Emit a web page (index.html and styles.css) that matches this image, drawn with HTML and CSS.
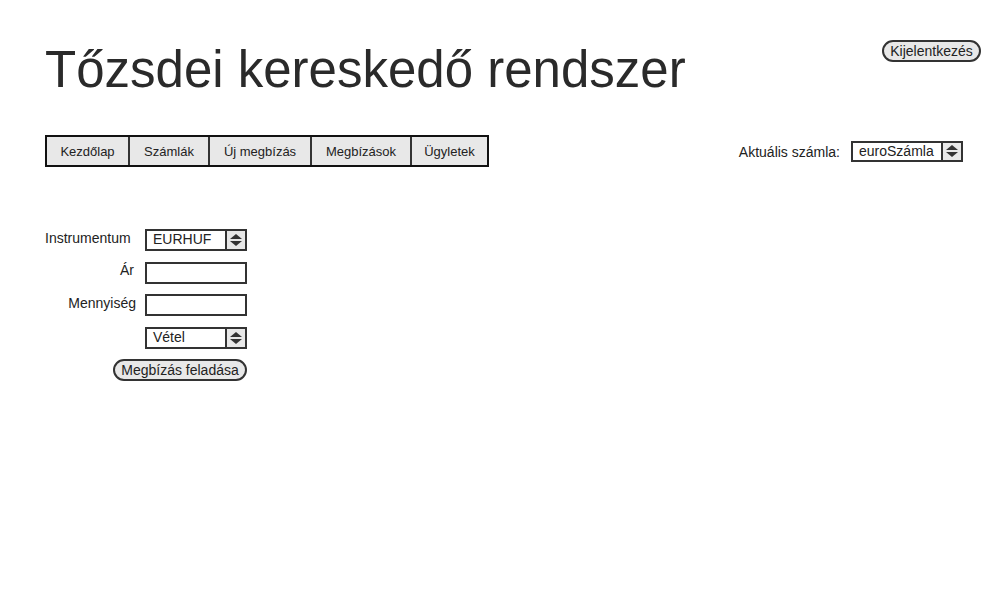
FILE: index.html
```html
<!DOCTYPE html>
<html lang="hu">
<head>
<meta charset="utf-8">
<title>Tőzsdei kereskedő rendszer</title>
<link rel="stylesheet" href="styles.css">
</head>
<body>
<div class="page">
  <header class="header">
    <h1 class="title">Tőzsdei kereskedő rendszer</h1>
    <button class="pill logout">Kijelentkezés</button>
  </header>
  <div class="toolbar">
    <nav class="tabs">
      <span class="tab t1">Kezdőlap</span>
      <span class="tab t2">Számlák</span>
      <span class="tab t3">Új megbízás</span>
      <span class="tab t4">Megbízások</span>
      <span class="tab t5">Ügyletek</span>
    </nav>
    <div class="account">
      <span class="account-label">Aktuális számla:</span>
      <span class="select acct-select"><span class="select-value">euroSzámla</span><span class="spin"><span class="up"></span><span class="down"></span></span></span>
    </div>
  </div>
  <form class="form">
    <label class="lbl lbl-wide">Instrumentum</label>
    <span class="select field"><span class="select-value">EURHUF</span><span class="spin"><span class="up"></span><span class="down"></span></span></span>
    <label class="lbl lbl-short">Ár</label>
    <span class="input field"></span>
    <label class="lbl">Mennyiség</label>
    <span class="input field"></span>
    <span class="lbl"></span>
    <span class="select field"><span class="select-value">Vétel</span><span class="spin"><span class="up"></span><span class="down"></span></span></span>
    <span class="submit-row"><button type="button" class="pill submit">Megbízás feladása</button></span>
  </form>
</div>
</body>
</html>
```
FILE: styles.css
```css
* { box-sizing: border-box; }
html, body { margin: 0; padding: 0; background: #fff; }
body { font-family: "Liberation Sans", Arial, sans-serif; color: #222; }
.page { padding: 40px 19px 0 45px; width: 1000px; }
.header { display: flex; justify-content: space-between; align-items: flex-start; height: 95px; }
.title { margin: 2px 0 0 0; font-weight: normal; font-size: 51px; line-height: 56px; color: #2a2a2a; }
.pill {
  font-family: "Liberation Sans", Arial, sans-serif;
  background: #e8e8e8; border: 2px solid #333; border-radius: 11px;
  color: #222; font-size: 14px; height: 22px; padding: 0 6px; line-height: 18px; cursor: default;
}
.logout { width: 99px; padding: 0; }
.toolbar { display: flex; justify-content: space-between; align-items: center; height: 32px; margin-right: 18px; }
.tabs { display: flex; border: 2px solid #111; background: #e8e8e8; height: 32px; }
.tab { font-size: 13px; color: #222; display: flex; align-items: center; justify-content: center; border-left: 2px solid #333; height: 28px; }
.tab.t1 { border-left: none; width: 81px; }
.tab.t2 { width: 80px; }
.tab.t3 { width: 102px; }
.tab.t4 { width: 100px; }
.tab.t5 { width: 77px; }
.account { display: flex; align-items: center; gap: 11px; font-size: 14px; color: #222; }
.account-label { margin-top: 1px; }
.select { display: flex; border: 2px solid #333; background: #fff; height: 21px; }
.select-value { flex: 1; font-size: 14px; line-height: 17px; padding-left: 6px; color: #222; }
.spin { width: 20px; border-left: 2px solid #333; background: #e8e8e8; display: flex; flex-direction: column; align-items: center; justify-content: center; gap: 2px; }
.up { width: 0; height: 0; border-left: 6px solid transparent; border-right: 6px solid transparent; border-bottom: 5px solid #333; }
.down { width: 0; height: 0; border-left: 6px solid transparent; border-right: 6px solid transparent; border-top: 5px solid #333; }
.acct-select { width: 112px; }
.form { display: grid; grid-template-columns: 91px 102px; column-gap: 9px; row-gap: 10.5px; margin-top: 62px; align-items: start; }
.lbl { text-align: right; font-size: 14px; color: #222; line-height: 16px; margin-top: 1px; }
.lbl-wide { text-align: left; }
.lbl-short { margin-top: 0; padding-right: 2px; }
.field { width: 102px; height: 22px; }
.input { display: block; border: 2px solid #333; background: #fff; }
.submit-row { grid-column: 1 / 3; display: flex; justify-content: flex-end; }
.submit { width: 134px; padding: 0; }
```
